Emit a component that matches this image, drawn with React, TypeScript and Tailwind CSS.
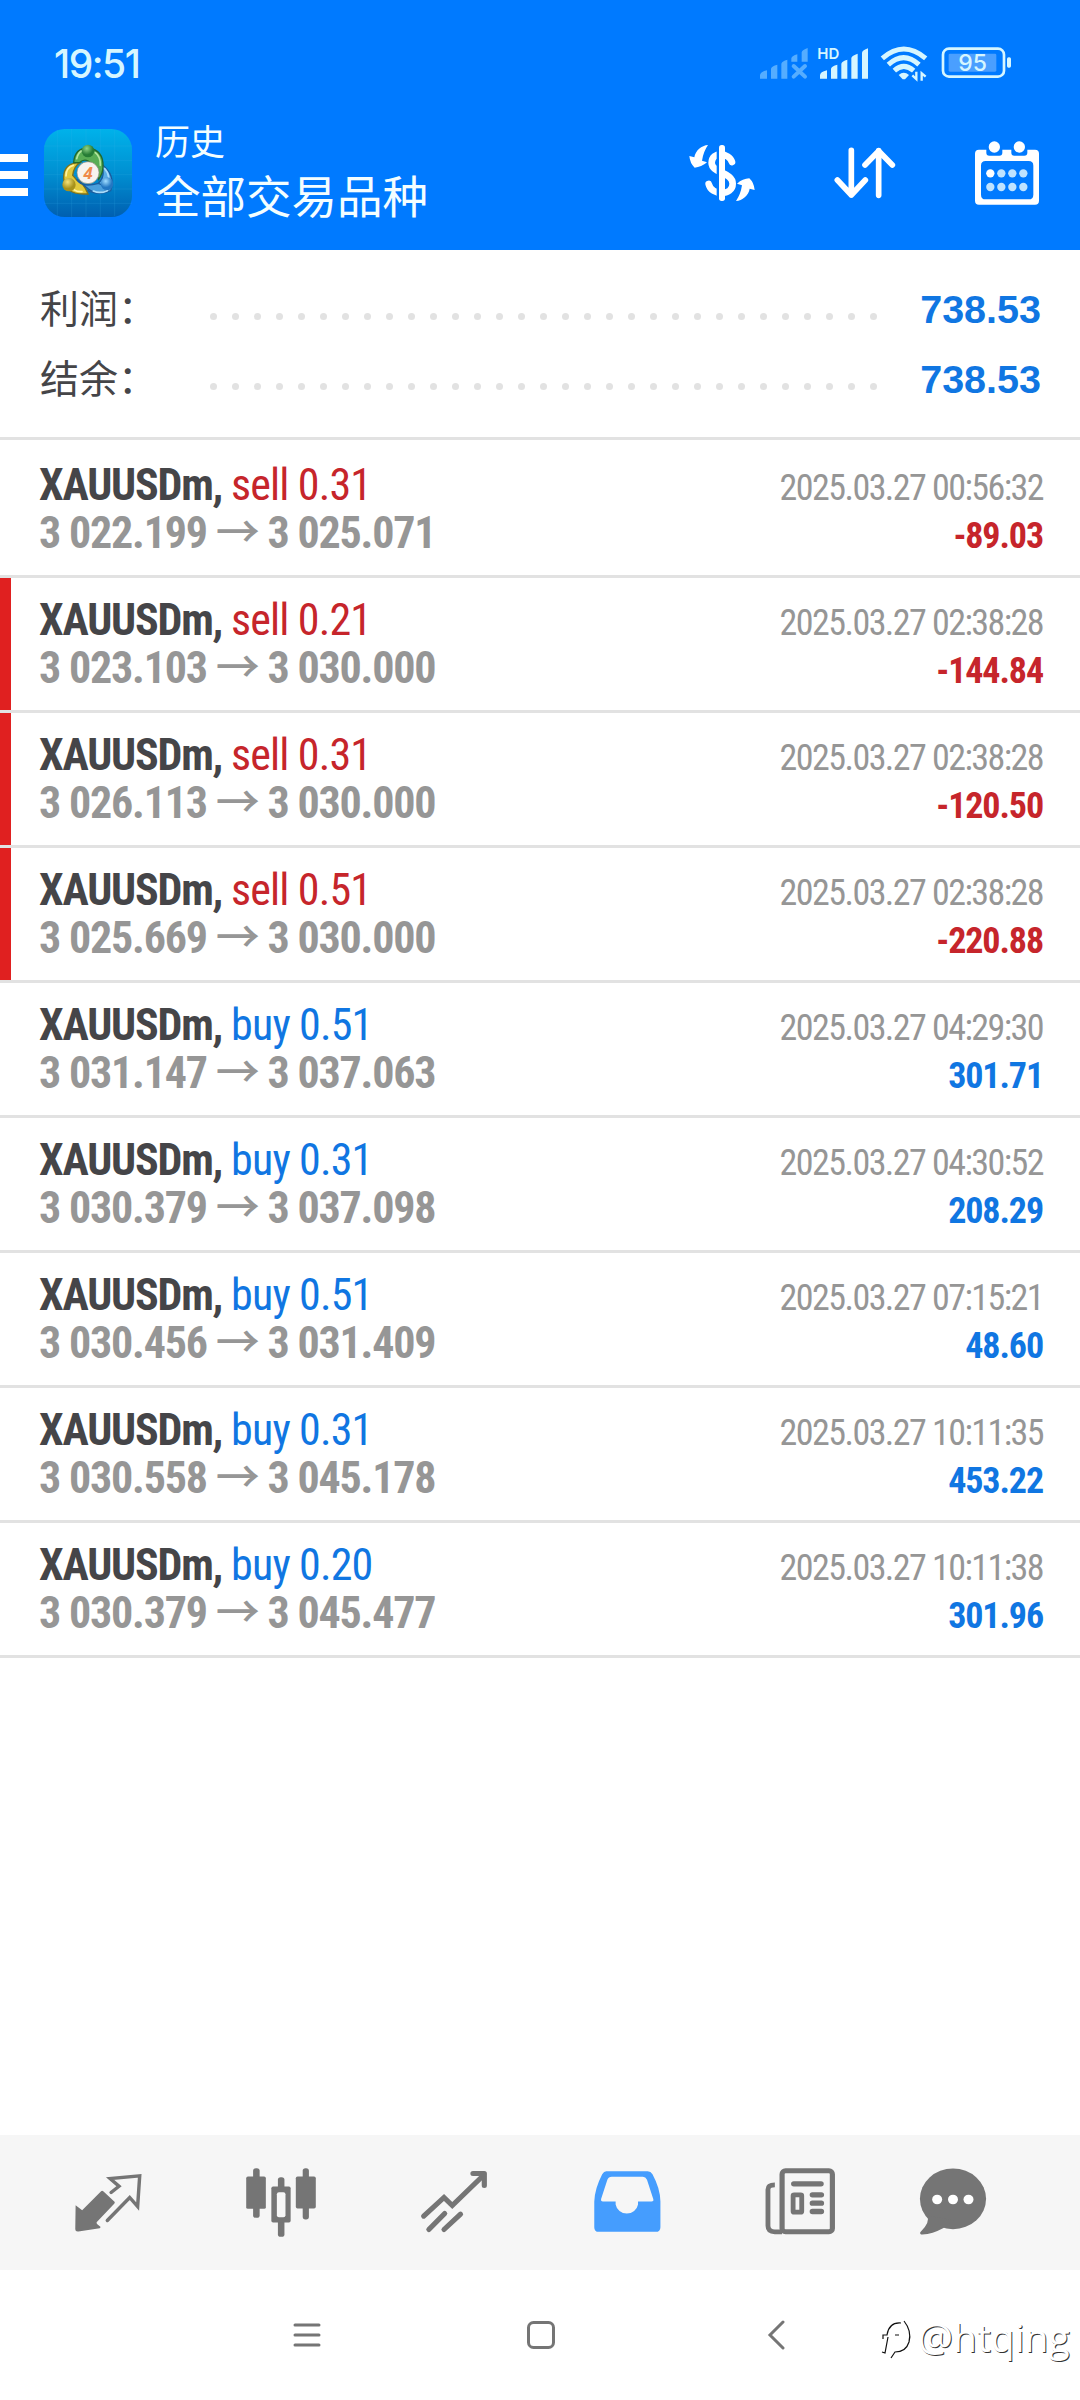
const deals = [
  { side: "sell", volume: "0.31", open: "3 022.199", close: "3 025.071", time: "2025.03.27 00:56:32", profit: "-89.03", stop: false },
  { side: "sell", volume: "0.21", open: "3 023.103", close: "3 030.000", time: "2025.03.27 02:38:28", profit: "-144.84", stop: true },
  { side: "sell", volume: "0.31", open: "3 026.113", close: "3 030.000", time: "2025.03.27 02:38:28", profit: "-120.50", stop: true },
  { side: "sell", volume: "0.51", open: "3 025.669", close: "3 030.000", time: "2025.03.27 02:38:28", profit: "-220.88", stop: true },
  { side: "buy", volume: "0.51", open: "3 031.147", close: "3 037.063", time: "2025.03.27 04:29:30", profit: "301.71", stop: false },
  { side: "buy", volume: "0.31", open: "3 030.379", close: "3 037.098", time: "2025.03.27 04:30:52", profit: "208.29", stop: false },
  { side: "buy", volume: "0.51", open: "3 030.456", close: "3 031.409", time: "2025.03.27 07:15:21", profit: "48.60", stop: false },
  { side: "buy", volume: "0.31", open: "3 030.558", close: "3 045.178", time: "2025.03.27 10:11:35", profit: "453.22", stop: false },
  { side: "buy", volume: "0.20", open: "3 030.379", close: "3 045.477", time: "2025.03.27 10:11:38", profit: "301.96", stop: false },
];

function StatusIcons() {
  return (
    <svg className="w-[254px] h-[38px]" viewBox="360 136 762 114" fill="#d6f6ff">
      {/* first sim, no signal */}
      <g fill="#55adff">
        <path d="M363 237v-10q0-10 21-15v25zM396 237v-30q2-8 19-12v42zM427 237v-45q2-8 18-12v57zM457 186v-10q2-8 18-12v22zM488 186v-28q2-8 18-13v41z" />
        <path d="M464 199l34 32M498 199l-34 32" stroke="#55adff" strokeWidth="12" strokeLinecap="round" />
      </g>
      <text x="535" y="177" fontSize="45" fontWeight="600" fontFamily="Inter, sans-serif">HD</text>
      <path d="M543 237v-10q0-10 21-15v25zM576 237v-30q2-8 19-12v42zM607 237v-45q2-8 18-12v57zM637 237v-62q2-8 19-13v75zM669 237v-78q2-8 18-13v91z" />
      {/* wifi */}
      <g fill="none" stroke="#d6f6ff" strokeWidth="15">
        <path d="M730 176q64-56 130 0" />
        <path d="M748 195q46-42 92 0" />
        <path d="M766 213q28-26 58 0" />
      </g>
      <path d="M779 226q15-14 31 0l-12 13h-7z" />
      <path d="M832 216v22l-12-11M848 243v-22l12 10" fill="none" stroke="#d6f6ff" strokeWidth="7" />
      {/* battery */}
      <rect x="912" y="147" width="183" height="84" rx="18" fill="none" stroke="#d6f6ff" strokeWidth="8" />
      <rect x="929" y="162" width="143" height="54" rx="4" fill="#4a9fff" />
      <rect x="1104" y="173" width="12" height="31" rx="5" />
      <text x="1001" y="214" fontSize="69" fontWeight="500" textAnchor="middle" fontFamily="Inter, sans-serif">95</text>
    </svg>
  );
}

function AppLogo() {
  return (
    <svg className="w-[88px] h-[88px]" viewBox="42 27 264 264">
      <defs>
        <linearGradient id="tile" x1="0" y1="0" x2="0" y2="1">
          <stop offset="0" stopColor="#00b2ea" />
          <stop offset="0.5" stopColor="#0090d2" />
          <stop offset="1" stopColor="#005fb0" />
        </linearGradient>
        <radialGradient id="green" cx="0.4" cy="0.3">
          <stop offset="0" stopColor="#8fd487" />
          <stop offset="1" stopColor="#267c35" />
        </radialGradient>
        <radialGradient id="yellow" cx="0.4" cy="0.3">
          <stop offset="0" stopColor="#f5e27a" />
          <stop offset="1" stopColor="#a8921c" />
        </radialGradient>
        <radialGradient id="sky" cx="0.4" cy="0.3">
          <stop offset="0" stopColor="#9fdcff" />
          <stop offset="1" stopColor="#2377c2" />
        </radialGradient>
      </defs>
      <rect x="42" y="27" width="264" height="264" rx="62" fill="url(#tile)" />
      <path d="M82 30v258M125 27v264M168 27v264M211 27v264M254 30v258M42 78h264M42 121h264M42 164h264M42 207h264M42 250h264" stroke="#3fb8ee" strokeOpacity="0.25" strokeWidth="2" />
      {/* three crescents, one per figure */}
      <g strokeWidth="4">
        <path d="M174 213Q210 228 242 212Q258 165 214 132Q228 170 205 190Z" fill="#5aaee6" stroke="#1a5c9e" />
        <path d="M174 222Q160 186 140 180L128 166Q132 138 150 128Q100 128 101 174Q104 222 160 222Z" fill="#e2c93c" stroke="#7f721c" />
        <path d="M131 128Q134 84 174 84Q222 90 219 142Q218 162 206 178L190 140Q170 108 148 128Z" fill="#58ad55" stroke="#22692f" />
        <path d="M140 178Q152 204 206 190L238 205Q206 232 176 208Z" fill="#4a9fdc" stroke="#1a5c9e" />
      </g>
      <g fill="none" strokeLinecap="round" strokeWidth="5">
        <path d="M140 116Q146 94 158 92M196 98Q212 110 211 136" stroke="#b5e6a0" />
        <path d="M108 168Q108 142 130 136M130 208Q142 216 156 215" stroke="#fff3a0" />
        <path d="M190 213Q210 222 232 212M236 172Q234 156 224 146" stroke="#a8dcfa" />
      </g>
      <circle cx="174" cy="93" r="19" fill="url(#green)" />
      <circle cx="117" cy="194" r="20" fill="url(#yellow)" />
      <circle cx="231" cy="191" r="19" fill="url(#sky)" />
      <circle cx="174" cy="158" r="33" fill="#f7f3ee" stroke="#8a8a78" strokeWidth="2" />
      <text x="174" y="176" fontSize="50" fontWeight="700" fontStyle="italic" textAnchor="middle" fill="#ef8a4a" fontFamily="Open Sans, sans-serif">4</text>
    </svg>
  );
}

function CurrencyIcon() {
  return (
    <svg className="w-[68px] h-[60px]" viewBox="144 429 204 180" fill="#fff">
      <path d="M276 486C268 458 215 452 215 489C215 520 278 516 278 551C278 588 214 588 206 552" fill="none" stroke="#fff" strokeWidth="20" strokeLinecap="round" />
      <rect x="230" y="440" width="16" height="160" fill="#007aff" />
      <rect x="237" y="435" width="18" height="168" rx="8" />
      <path d="M204 435C185 436 166 452 163 472L148 468Q150 490 164 503Q184 502 201 487L186 482Q190 455 204 435Z" />
      <path transform="rotate(180 246 519)" d="M204 435C185 436 166 452 163 472L148 468Q150 490 164 503Q184 502 201 487L186 482Q190 455 204 435Z" />
    </svg>
  );
}

function SortIcon() {
  return (
    <svg className="w-[64px] h-[60px]" viewBox="579 429 192 180" fill="none" stroke="#fff" strokeWidth="17" strokeLinecap="round" strokeLinejoin="round">
      <path d="M634 451v134M592 540l42 45 42-45" />
      <path d="M716 586V452M675 495l41-42 41 42" />
    </svg>
  );
}

function CalendarIcon() {
  return (
    <svg className="w-[66px] h-[66px]" viewBox="1001 415 198 198">
      <path fill="#fff" fillRule="evenodd" d="M1016 444H1184Q1196 444 1196 456V597Q1196 609 1184 609H1016Q1004 609 1004 597V456Q1004 444 1016 444ZM1036 478Q1022 478 1022 492V579Q1022 593 1036 593H1165Q1179 593 1179 579V492Q1179 478 1165 478Z" />
      <rect x="1038" y="430" width="48" height="32" rx="9" fill="#007aff" />
      <rect x="1113" y="430" width="48" height="32" rx="9" fill="#007aff" />
      <circle cx="1062" cy="436" r="17" fill="#fff" />
      <circle cx="1137" cy="436" r="17" fill="#fff" />
      {[515, 556].map((y) =>
        [1050, 1083, 1116, 1149].map((x) => (
          <circle key={`${x}-${y}`} cx={x} cy={y} r="12.5" fill={x === 1050 && y === 515 ? "#fff" : "#bfe3ff"} />
        ))
      )}
    </svg>
  );
}

function Dots() {
  return (
    <div className="flex gap-[15px] mt-[20px]">
      {Array.from({ length: 31 }, (_, i) => (
        <span key={i} className="size-[7px] rounded-full bg-[#e2e2e2]" />
      ))}
    </div>
  );
}

function SummaryRow({ label, value }: { label: string; value: string }) {
  return (
    <div className="h-[70px] flex items-center pl-[40px] pr-[39px]">
      <span className="w-[170px] text-[39px] leading-[70px] text-[#454548] font-['Noto_Sans_CJK_SC',sans-serif]">{label}</span>
      <Dots />
      <span className="ml-auto text-[39.5px] leading-[70px] mt-[5px] font-bold text-[#1076e2] font-['Liberation_Sans',sans-serif]">{value}</span>
    </div>
  );
}

function DealRow({ deal }: { deal: (typeof deals)[number] }) {
  const sell = deal.side === "sell";
  return (
    <div className="h-[135px] flex border-b-[3px] border-[#e2e2e2] font-['Roboto',sans-serif] font-stretch-condensed whitespace-nowrap">
      <div className={sell && deal.stop ? "w-[11px] bg-[#e02020]" : "w-[11px]"} />
      <div className="flex-1 flex justify-between pl-[28px] pr-[37px]">
        <div className="pt-[18px] text-[44px] leading-[48px]">
          <div className="h-[48px]">
            <span className="font-bold tracking-[-1.2px] text-[#454548]">XAUUSDm, </span>
            <span className={sell ? "tracking-[-0.85px] text-[#c6252b]" : "tracking-[-0.85px] text-[#1076e2]"}>
              {deal.side} {deal.volume}
            </span>
          </div>
          <div className="h-[48px] font-bold tracking-[-1.2px] text-[#969696]">
            {deal.open} <span className="leading-[0] font-medium font-['Noto_Sans_CJK_SC',sans-serif]">→</span> {deal.close}
          </div>
        </div>
        <div className="pt-[21px] text-[36px] leading-[48px] text-right">
          <div className="tracking-[-1.55px] text-[#969696]">{deal.time}</div>
          <div className={sell ? "font-bold tracking-[-1.1px] text-[#c6252b]" : "font-bold tracking-[-1.1px] text-[#1076e2]"}>{deal.profit}</div>
        </div>
      </div>
    </div>
  );
}

function TabBar() {
  return (
    <div className="h-[135px] shrink-0 bg-[#f6f6f6] flex items-center pl-[72px]">
      <div className="flex gap-[101px]">
        <svg className="size-[72px]" viewBox="209.5 139.5 209 216" preserveAspectRatio="none">
          <path d="M220 254L239 269L294 212Q297 209 301 213L333 244Q335 247 332 250L281 305Q280 308 283 311L292 319Q293 322 290 323L228 333Q219 334 219 326Z" fill="#757575" />
          <path d="M323 216L346 197L320 174L406 166L400 258L377 231L312 300" fill="none" stroke="#757575" strokeWidth="10" strokeLinecap="round" />
        </svg>
        <svg className="size-[72px]" viewBox="711.5 139.5 209 216" preserveAspectRatio="none" fill="#757575">
          <rect x="735" y="143" width="19" height="149" rx="8" />
          <rect x="715" y="168" width="57" height="97" rx="5" />
          <rect x="879" y="143" width="18" height="154" rx="8" />
          <rect x="859" y="168" width="58" height="96" rx="5" />
          <rect x="807" y="170" width="19" height="179" rx="8" />
          <rect x="788" y="198" width="56" height="108" rx="5" />
          <rect x="804" y="215" width="25" height="75" rx="6" fill="#f6f6f6" />
        </svg>
        <svg className="size-[72px]" viewBox="1213.5 139.5 209 216" preserveAspectRatio="none" fill="none" stroke="#757575" strokeWidth="15" strokeLinecap="round">
          <path d="M1230 287L1289 231L1313 255L1403 165" />
          <path d="M1373 159H1406V195" strokeLinejoin="round" />
          <path d="M1245 327L1291 279M1289 327L1337 281" />
        </svg>
        <svg className="size-[72px]" viewBox="149.5 139.5 209 216" preserveAspectRatio="none">
          <path fill="#459dfe" fillRule="evenodd" d="M194 152H314Q323 152 328 161Q351 205 351 243V320Q351 334 337 334H172Q159 334 159 320V243Q160 205 182 161Q187 152 194 152ZM210 169Q200 169 197 178L179 235Q177 243 184 243H221V252A33 33 0 0 0 286 252V243H325Q333 243 330 235L312 178Q308 169 300 169Z" />
        </svg>
        <svg className="size-[72px]" viewBox="652.5 139.5 209 216" preserveAspectRatio="none" fill="none" stroke="#757575" strokeLinecap="round">
          <rect x="705" y="151" width="146" height="183" rx="10" strokeWidth="15" />
          <path d="M684 193Q664 193 664 207V316Q664 334 684 334H705" strokeWidth="14" strokeLinecap="butt" />
          <path d="M739 190H818M793 223H819M793 248H819M793 273H819" strokeWidth="16" />
          <rect x="737" y="223" width="25" height="52" rx="3" strokeWidth="14" />
        </svg>
      </div>
      <svg className="size-[72px] ml-[81px]" viewBox="1094.5 139.5 209 216" preserveAspectRatio="none" fill="#757575">
        <ellipse cx="1199" cy="235" rx="96" ry="91" />
        <path d="M1124 285Q1134 306 1104 335Q1102 342 1110 342Q1140 340 1170 323L1200 300Z" />
        <g fill="#fff">
          <circle cx="1153" cy="237" r="14.5" />
          <circle cx="1199" cy="237" r="14.5" />
          <circle cx="1244" cy="237" r="14.5" />
        </g>
      </svg>
    </div>
  );
}

export default function App() {
  return (
    <div className="w-[1080px] h-[2400px] flex flex-col bg-white overflow-hidden">
      <header className="h-[250px] shrink-0 bg-[#007aff] flex flex-col">
        <div className="h-[125px] pt-[2px] flex justify-between items-center pl-[54px] pr-[67px]">
          <span className="text-[39px] leading-[48px] tracking-[-1.5px] text-[#d6f6ff] font-medium font-['Inter',sans-serif]">19:51</span>
          <StatusIcons />
        </div>
        <div className="h-[96px] flex items-center">
          <div className="flex flex-col gap-[9px] mt-[3px]">
            <span className="w-[28px] h-[8px] bg-white" />
            <span className="w-[28px] h-[8px] bg-white" />
            <span className="w-[28px] h-[8px] bg-white" />
          </div>
          <div className="ml-[16px]">
            <AppLogo />
          </div>
          <div className="ml-[23px] -mt-[6px] text-[#f4feff] font-['Noto_Sans_CJK_SC',sans-serif]">
            <div className="text-[35px] leading-[48px]">历史</div>
            <div className="text-[45.5px] leading-[60px]">全部交易品种</div>
          </div>
          <div className="ml-auto flex items-center pr-[40px]">
            <CurrencyIcon />
            <div className="ml-[77px]">
              <SortIcon />
            </div>
            <div className="ml-[77px]">
              <CalendarIcon />
            </div>
          </div>
        </div>
      </header>

      <section className="h-[190px] shrink-0 pt-[21px] border-b-[3px] border-[#e2e2e2]">
        <SummaryRow label="利润：" value="738.53" />
        <SummaryRow label="结余：" value="738.53" />
      </section>

      <main className="flex-1 pt-[3px]">
        {deals.map((deal, i) => (
          <DealRow key={i} deal={deal} />
        ))}
      </main>

      <TabBar />

      <footer className="h-[130px] shrink-0 flex items-center">
        <svg className="ml-[292px] w-[30px] h-[30px]" viewBox="0 0 30 30" stroke="#757575" strokeWidth="3" strokeLinecap="round">
          <path d="M3 5h24M3 15h24M3 25h24" />
        </svg>
        <svg className="ml-[204px] w-[30px] h-[30px]" viewBox="0 0 30 30" fill="none" stroke="#757575" strokeWidth="3">
          <rect x="2.5" y="2.5" width="25" height="25" rx="5" />
        </svg>
        <svg className="ml-[206px] w-[30px] h-[30px]" viewBox="0 0 30 30" fill="none" stroke="#757575" strokeWidth="3" strokeLinecap="round">
          <path d="M21 2L8 15L21 28" />
        </svg>
        <div className="ml-[88px] mt-[4px] flex items-center">
          <svg className="w-[34px] h-[44px]" viewBox="0 0 34 44" fill="none" stroke="#111" strokeWidth="1.2">
            <path d="M2 37L5 38L8 22M3 24V20H7Q9 7 21 8M15 20H19M24 6Q32 16 29 27Q26 37 15 37L11 43" />
          </svg>
          <span className="ml-[4px] text-[39px] leading-[50px] text-white font-['Open_Sans',sans-serif] [text-shadow:1px_1px_0_#333]">@htqing</span>
        </div>
      </footer>
    </div>
  );
}
